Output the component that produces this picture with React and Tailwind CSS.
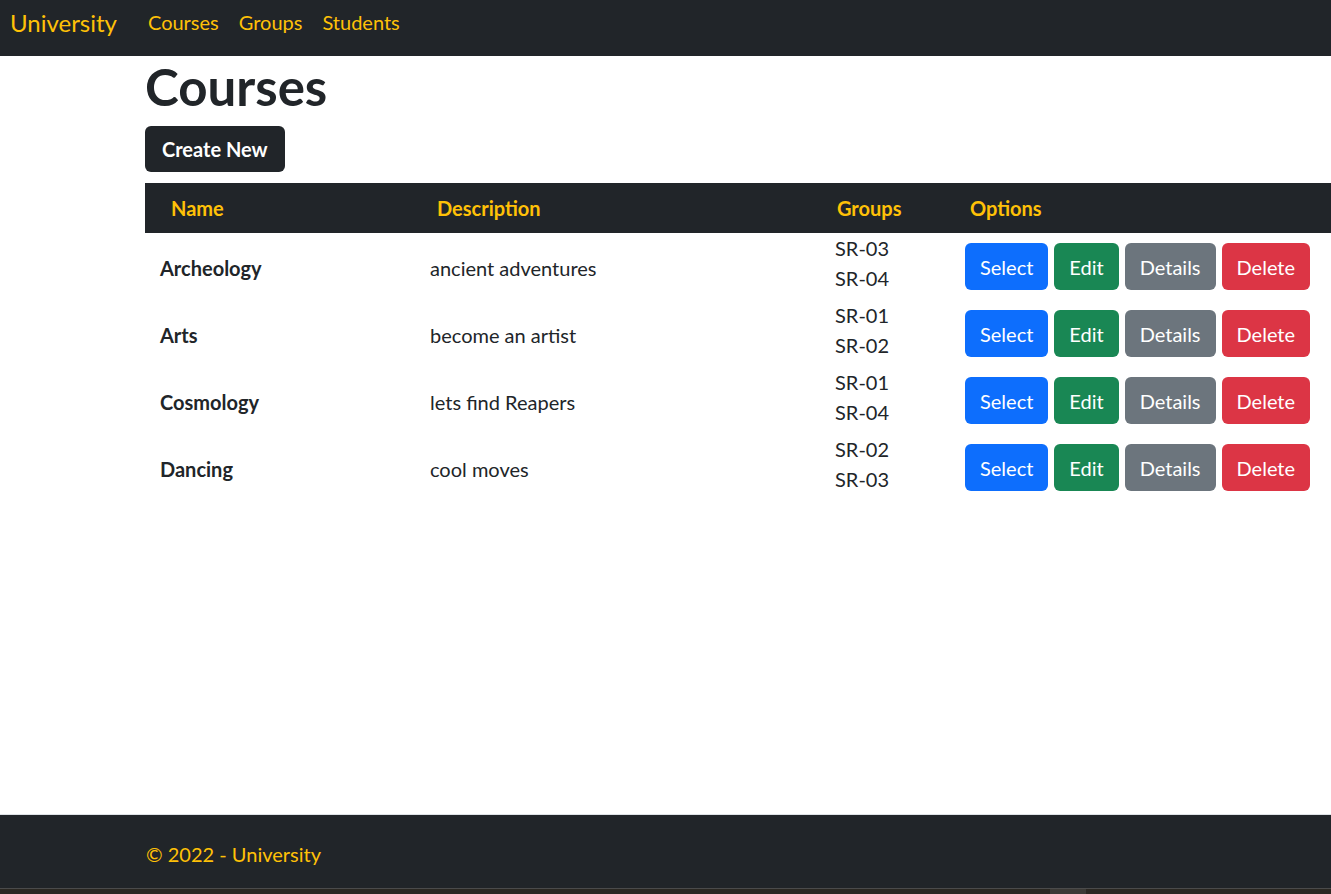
import React from "react";

const courses = [
  { name: "Archeology", description: "ancient adventures", groups: ["SR-03", "SR-04"] },
  { name: "Arts", description: "become an artist", groups: ["SR-01", "SR-02"] },
  { name: "Cosmology", description: "lets find Reapers", groups: ["SR-01", "SR-04"] },
  { name: "Dancing", description: "cool moves", groups: ["SR-02", "SR-03"] },
];

const App = () => {
  return (
    <div className="flex flex-col h-screen bg-white text-[#212529] font-['Lato',sans-serif] overflow-hidden">
      {/* Navbar */}
      <nav className="h-[56px] shrink-0 bg-[#212529] flex items-start pt-[4px] pl-[10px]">
        <a href="#" className="text-[24px] leading-[37px] text-[#ffc107] mr-[21px]">University</a>
        <ul className="flex">
          <li><a href="#" className="block px-[10px] text-[20px] leading-[37px] text-[#ffc107]">Courses</a></li>
          <li><a href="#" className="block px-[10px] text-[20px] leading-[37px] text-[#ffc107]">Groups</a></li>
          <li><a href="#" className="block px-[10px] text-[20px] leading-[37px] text-[#ffc107]">Students</a></li>
        </ul>
      </nav>

      {/* Main */}
      <main className="flex-1 pl-[145px]">
        <h1 className="text-[51px] leading-[60px] font-bold mt-[1px] mb-[9px]">Courses</h1>
        <button className="px-[17px] h-[46px] rounded-[6px] bg-[#212529] text-white text-[20px] font-bold">
          Create New
        </button>

        <table className="w-full mt-[11px] border-collapse text-[20px]">
          <thead>
            <tr className="bg-[#212529] text-[#ffc107] font-bold h-[50px]">
              <th className="w-[275px] text-left pl-[26px]">Name</th>
              <th className="w-[405px] text-left pl-[17px]">Description</th>
              <th className="w-[130px] text-left pl-[12px]">Groups</th>
              <th className="text-left pl-[15px]">Options</th>
            </tr>
          </thead>
          <tbody>
            {courses.map((course) => (
              <tr key={course.name} className="h-[67px]">
                <td className="align-middle pl-[15px] pt-[3px] font-bold">{course.name}</td>
                <td className="align-middle pl-[10px] pt-[2px]">{course.description}</td>
                <td className="align-middle pl-[10px]">
                  <div className="-mt-[8px]">
                    {course.groups.map((g) => (
                      <div key={g} className="leading-[30px]">{g}</div>
                    ))}
                  </div>
                </td>
                <td className="align-middle pl-[10px]">
                  <div className="flex gap-[6px]">
                    <button className="h-[47px] px-[15px] rounded-[6px] bg-[#0d6efd] text-white">Select</button>
                    <button className="h-[47px] px-[15px] rounded-[6px] bg-[#198754] text-white">Edit</button>
                    <button className="h-[47px] px-[15px] rounded-[6px] bg-[#6c757d] text-white">Details</button>
                    <button className="h-[47px] px-[15px] rounded-[6px] bg-[#dc3545] text-white">Delete</button>
                  </div>
                </td>
              </tr>
            ))}
          </tbody>
        </table>
      </main>

      {/* Footer */}
      <footer className="h-[74px] shrink-0 border-t border-[#dee2e6] bg-[#212529] flex items-center pl-[146px]">
        <span className="text-[20px] text-[#ffc107] mt-[5px]">© 2022 - University</span>
      </footer>
      <div className="h-[6px] shrink-0 border-t border-[#4b4b4b] bg-[#2b2822] relative">
        <div className="absolute left-[1050px] top-0 w-[36px] h-full bg-[#3c3a36]" />
      </div>
    </div>
  );
};

export default App;
